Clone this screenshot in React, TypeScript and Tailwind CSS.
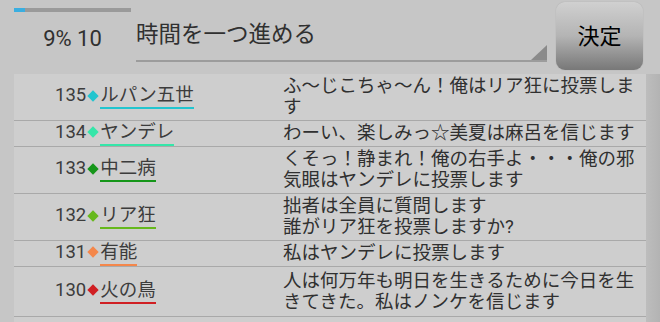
import React from "react";

type Row = { no: number; color: string; name: string; lines: string[]; last?: boolean };

const rows: Row[] = [
  { no: 135, color: "#22c5cf", name: "ルパン五世", lines: ["ふ〜じこちゃ〜ん！俺はリア狂に投票しま", "す"] },
  { no: 134, color: "#35e6a9", name: "ヤンデレ", lines: ["わーい、楽しみっ☆美夏は麻呂を信じます"] },
  { no: 133, color: "#16961a", name: "中二病", lines: ["くそっ！静まれ！俺の右手よ・・・俺の邪", "気眼はヤンデレに投票します"] },
  { no: 132, color: "#66b81c", name: "リア狂", lines: ["拙者は全員に質問します", "誰がリア狂を投票しますか?"] },
  { no: 131, color: "#f4874b", name: "有能", lines: ["私はヤンデレに投票します"] },
  { no: 130, color: "#d01f23", name: "火の鳥", lines: ["人は何万年も明日を生きるために今日を生", "きてきた。私はノンケを信じます"], last: true },
];

const font = { fontFamily: 'Roboto, "Noto Sans CJK JP", sans-serif' };

export default function App() {
  return (
    <div className="w-[660px] h-[322px] bg-[#c6c6c6] flex flex-col overflow-hidden" style={font}>
      <div className="h-[74px] flex pl-[14px] shrink-0">
        <div className="w-[117px] flex flex-col">
          <div className="mt-[8px] h-[4px] bg-[#9a9a9a] flex">
            <div className="w-[11px] bg-[#3aaee0]" />
          </div>
          <div className="mt-[15px] text-center text-[22px] leading-[24px] text-[#303030]">9% 10</div>
        </div>
        <div className="ml-[5px] w-[411px] h-[62px] relative border-b-2 border-[#9c9c9c]">
          <div className="pt-[21px] text-[22.5px] leading-[26px] text-[#303030] whitespace-nowrap">時間を一つ進める</div>
          <svg className="absolute right-0 bottom-0" width="16" height="15" viewBox="0 0 16 15">
            <polygon points="16,0 16,15 0,15" fill="#8a8a8a" />
          </svg>
        </div>
        <div className="ml-[9px] mt-[2px] w-[87px] h-[68px] rounded-[9px] bg-gradient-to-b from-[#d0d0d0] via-[#b4b4b4] to-[#787878] flex items-center justify-center text-[22px] text-black shadow-[0_0_1px_#999]">
          決定
        </div>
      </div>
      <div className="flex-1 flex min-h-0">
        <div className="ml-[14px] w-[632px] bg-[#cecece] flex flex-col overflow-hidden">
          {rows.map((r) => (
            <div key={r.no} className="flex border-b border-[#a9a9a9]">
              <div className="w-[269px] pl-[41px] flex items-center text-[18.5px] text-[#3c3c3c] whitespace-nowrap">
                <span className="leading-[21px] pb-[3px]">{r.no}</span>
                <span
                  className="inline-block w-[8px] h-[8px] rotate-45 mx-[3px] mb-[3px]"
                  style={{ backgroundColor: r.color }}
                />
                <span className="leading-[21px] pb-[1px] border-b-2" style={{ borderColor: r.color }}>
                  {r.name}
                </span>
              </div>
              <div
                className={
                  "flex-1 text-[18.5px] leading-[21px] text-[#303030] whitespace-nowrap " +
                  (r.last ? "pt-[4px] pb-[3px]" : "py-[2px]")
                }
              >
                {r.lines.map((l, i) => (
                  <div key={i}>{l}</div>
                ))}
              </div>
            </div>
          ))}
        </div>
        <div className="flex-1 bg-gradient-to-r from-[#bdbdbd] to-[#b3b3b3]" />
      </div>
    </div>
  );
}
